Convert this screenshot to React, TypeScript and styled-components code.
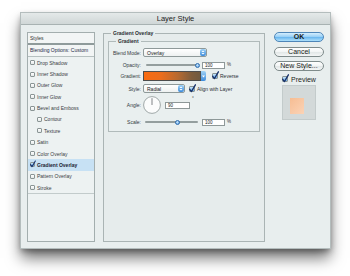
import React from 'react';
import styled, { createGlobalStyle } from 'styled-components';

const GlobalStyle = createGlobalStyle`
  html, body {
    margin: 0;
    padding: 0;
    background: #ffffff;
  }
  body {
    font-family: "Liberation Sans", Arial, sans-serif;
    color: #2c3034;
  }
  * {
    box-sizing: border-box;
  }
`;

const Page = styled.div`
  width: 350px;
  height: 276px;
  padding: 13px 0 0 21px;
  overflow: hidden;
`;

const Dialog = styled.div`
  width: 309px;
  height: 235px;
  background: #e8eeee;
  box-shadow: 0 0 0 1px #b4bdbd, 0 10px 14px rgba(0, 0, 0, 0.55), 0 3px 6px rgba(0, 0, 0, 0.35);
  display: flex;
  flex-direction: column;
`;

const TitleBar = styled.div`
  height: 12px;
  line-height: 12px;
  text-align: center;
  font-size: 7.5px;
  color: #222;
  background: linear-gradient(#e4e9e9, #d0d7d7);
  border-bottom: 1px solid #a8b2b2;
`;

const Body = styled.div`
  display: flex;
  align-items: flex-start;
  padding: 7px 6px 0 6px;
`;

/* ---------- left style list ---------- */

const StyleList = styled.div`
  width: 68px;
  height: 210px;
  border: 1px solid #a3aeae;
  background: #edf2f2;
  display: flex;
  flex-direction: column;
`;

const ListHeader = styled.div`
  height: 10px;
  line-height: 10px;
  padding-left: 2px;
  font-size: 5px;
  background: #f2f5f5;
`;

const HeaderRule = styled.div`
  height: 2px;
  background: #8f9b9b;
`;

const BlendingRow = styled.div`
  height: 12px;
  line-height: 11px;
  padding-left: 2px;
  font-size: 5px;
  color: #1e2a46;
  border-bottom: 1px solid #b6c0c0;
  background: #f2f5f5;
`;

const ListItem = styled.div<{ $indent?: boolean; $selected?: boolean }>`
  height: 11.36px;
  display: flex;
  align-items: center;
  gap: 2px;
  padding-left: ${p => (p.$indent ? 9 : 2)}px;
  font-size: 5px;
  font-weight: ${p => (p.$selected ? 'bold' : 'normal')};
  color: ${p => (p.$selected ? '#1b2233' : '#3a4044')};
  background: ${p => (p.$selected ? '#c7e1f4' : 'transparent')};
`;

const ListEnd = styled.div`
  border-top: 1px solid #c2cbcb;
`;

/* ---------- checkbox ---------- */

const Box = styled.span<{ $size: number; $checked?: boolean }>`
  flex: none;
  width: ${p => p.$size}px;
  height: ${p => p.$size}px;
  border: 1px solid #8a9595;
  border-radius: 1px;
  background: ${p => (p.$checked ? 'linear-gradient(#c6e4fb, #6fb1e8)' : 'linear-gradient(#ffffff, #e3e8e8)')};
  display: inline-flex;
  align-items: center;
  justify-content: center;
`;

const CheckMark = styled.svg`
  flex: none;
  overflow: visible;
`;

const Checkbox = ({ checked, size = 5 }: { checked?: boolean; size?: number }) => (
  <Box $size={size} $checked={checked}>
    {checked && (
      <CheckMark width={size} height={size} viewBox="0 0 6 6">
        <path d="M0.6 3.2 L2.4 5.6 L6.4 -1.2" fill="none" stroke="#16306a" strokeWidth="1.3" strokeLinecap="round" strokeLinejoin="round" />
      </CheckMark>
    )}
  </Box>
);

/* ---------- middle options ---------- */

const Group = styled.fieldset<{ $w: number; $h: number; $outer?: boolean }>`
  margin: ${p => (p.$outer ? '-2px 0 0 8px' : '0')};
  padding: ${p => (p.$outer ? '2px 4px 0 4px' : '4px 0 0 0')};
  width: ${p => p.$w}px;
  height: ${p => p.$h}px;
  min-width: 0;
  border: 1px solid ${p => (p.$outer ? '#aab4b4' : '#b0baba')};
  background: ${p => (p.$outer ? '#e6ecec' : '#e9efef')};
`;

const Legend = styled.legend<{ $ml: number }>`
  margin-left: ${p => p.$ml}px;
  padding: 0 2px;
  font-size: 5px;
  line-height: 6px;
  font-weight: bold;
  color: #2a2e33;
`;

const Row = styled.div<{ $h: number; $mt: number }>`
  display: grid;
  grid-template-columns: 32px auto;
  column-gap: 2px;
  align-items: center;
  height: ${p => p.$h}px;
  margin-top: ${p => p.$mt}px;
`;

const Label = styled.span`
  text-align: right;
  font-size: 5px;
  color: #333a3e;
  white-space: nowrap;
`;

const Controls = styled.div`
  display: flex;
  align-items: center;
`;

const Select = styled.div<{ $w: number }>`
  width: ${p => p.$w}px;
  height: 9px;
  border: 1px solid #8e9999;
  border-radius: 2px;
  background: linear-gradient(#ffffff, #eef1f1);
  display: flex;
  align-items: center;
  justify-content: space-between;
  padding-left: 3px;
  font-size: 5px;
  color: #222;
`;

const Stepper = styled.span`
  width: 6px;
  height: 7px;
  border-radius: 2px;
  background: linear-gradient(#9ed2f7, #3d8bdb);
  display: inline-flex;
  align-items: center;
  justify-content: center;
`;

const StepArrows = () => (
  <Stepper>
    <svg width="4" height="5" viewBox="0 0 4 5">
      <path d="M0.5 2 L2 0.4 L3.5 2 Z M0.5 3 L2 4.6 L3.5 3 Z" fill="#ffffff" />
    </svg>
  </Stepper>
);

const Track = styled.div<{ $w: number; $ml: number }>`
  position: relative;
  width: ${p => p.$w}px;
  height: 2px;
  margin-left: ${p => p.$ml}px;
  border-radius: 1px;
  background: #949e9e;
`;

const Thumb = styled.span`
  position: absolute;
  top: -1.5px;
  width: 5px;
  height: 5px;
  margin-left: -2.5px;
  border-radius: 50%;
  border: 1px solid #2f6cae;
  background: radial-gradient(circle at 40% 35%, #d4ecff, #4c9ae2);
`;

const NumberBox = styled.span<{ $w: number; $ml: number }>`
  width: ${p => p.$w}px;
  height: 7px;
  margin-left: ${p => p.$ml}px;
  border: 1px solid #8e9898;
  background: #ffffff;
  font-size: 4.5px;
  line-height: 5px;
  padding-left: 2px;
  color: #222;
`;

const Unit = styled.span`
  margin-left: 2px;
  font-size: 4.5px;
  align-self: flex-start;
  color: #333;
`;

const GradientSwatch = styled.span`
  width: 58px;
  height: 10px;
  border: 1px solid #4d4d4d;
  background: linear-gradient(90deg, #f86b12 0%, #ec6d1c 30%, #b86a30 60%, #7f5d3c 85%, #705a40 100%);
`;

const SwatchArrow = styled.span`
  width: 5px;
  height: 10px;
  border-radius: 0 2px 2px 0;
  background: linear-gradient(#9ed2f7, #3d8bdb);
  display: inline-flex;
  align-items: center;
  justify-content: center;
`;

const Inline = styled.span<{ $ml: number }>`
  display: inline-flex;
  align-items: center;
  gap: 2px;
  margin-left: ${p => p.$ml}px;
  font-size: 5px;
  color: #2a2e33;
  white-space: nowrap;
`;

const Dial = () => (
  <svg width="18" height="18" viewBox="0 0 18 18">
    <circle cx="9" cy="9" r="8.4" fill="#fbfcfc" stroke="#8a9494" strokeWidth="0.8" />
    <line x1="9" y1="9" x2="9" y2="2.2" stroke="#4a4f54" strokeWidth="0.7" />
  </svg>
);

/* ---------- right buttons ---------- */

const Actions = styled.div`
  width: 50px;
  margin-left: 9px;
  display: flex;
  flex-direction: column;
`;

const Button = styled.div<{ $primary?: boolean; $mt: number }>`
  height: 10px;
  margin-top: ${p => p.$mt}px;
  border-radius: 5px;
  border: 1px solid ${p => (p.$primary ? '#4f86b8' : '#7f8b8b')};
  background: ${p =>
    p.$primary
      ? 'linear-gradient(#d4eefe, #9bd1f6 45%, #6cb8ef 55%, #aee0fb)'
      : 'linear-gradient(#ffffff, #f1f4f4 50%, #e3e8e8 55%, #f4f6f6)'};
  text-align: center;
  font-size: 7px;
  line-height: 8px;
  font-weight: ${p => (p.$primary ? 'bold' : 'normal')};
  color: #1c1f22;
`;

const PreviewRow = styled.div`
  height: 8px;
  margin-top: 4px;
  padding-left: 8px;
  display: flex;
  align-items: center;
  gap: 3px;
  font-size: 7px;
  color: #1c1f22;
`;

const PreviewBox = styled.div`
  width: 34px;
  height: 35px;
  margin: 2px 0 0 8px;
  padding: 12px 0 0 7px;
  border: 1px solid #c3cbcb;
  background: #d3d9d9;
`;

const PreviewChip = styled.div`
  width: 14px;
  height: 16px;
  background: linear-gradient(135deg, #f6bd93, #fbd3b6);
`;

const effects = [
  { name: 'Drop Shadow' },
  { name: 'Inner Shadow' },
  { name: 'Outer Glow' },
  { name: 'Inner Glow' },
  { name: 'Bevel and Emboss' },
  { name: 'Contour', indent: true },
  { name: 'Texture', indent: true },
  { name: 'Satin' },
  { name: 'Color Overlay' },
  { name: 'Gradient Overlay', selected: true },
  { name: 'Pattern Overlay' },
  { name: 'Stroke' },
];

export default function App() {
  return (
    <>
      <GlobalStyle />
      <Page>
        <Dialog>
          <TitleBar>Layer Style</TitleBar>
          <Body>
            <StyleList>
              <ListHeader>Styles</ListHeader>
              <HeaderRule />
              <BlendingRow>Blending Options: Custom</BlendingRow>
              {effects.map(e => (
                <ListItem key={e.name} $indent={e.indent} $selected={e.selected}>
                  <Checkbox checked={e.selected} />
                  {e.name}
                </ListItem>
              ))}
              <ListEnd />
            </StyleList>

            <Group $outer $w={162} $h={212}>
              <Legend $ml={3}>Gradient Overlay</Legend>
              <Group $w={152} $h={94}>
                <Legend $ml={7}>Gradient</Legend>
                <Row $h={9} $mt={0}>
                  <Label>Blend Mode:</Label>
                  <Controls>
                    <Select $w={64}>
                      Overlay
                      <StepArrows />
                    </Select>
                  </Controls>
                </Row>
                <Row $h={8} $mt={4}>
                  <Label>Opacity:</Label>
                  <Controls>
                    <Track $w={51} $ml={3}>
                      <Thumb style={{ left: '100%' }} />
                    </Track>
                    <NumberBox $w={23} $ml={5}>100</NumberBox>
                    <Unit>%</Unit>
                  </Controls>
                </Row>
                <Row $h={10} $mt={2}>
                  <Label>Gradient:</Label>
                  <Controls>
                    <GradientSwatch />
                    <SwatchArrow>
                      <svg width="3" height="3" viewBox="0 0 3 3">
                        <path d="M0 0.6 L3 0.6 L1.5 2.6 Z" fill="#fff" />
                      </svg>
                    </SwatchArrow>
                    <Inline $ml={6}>
                      <Checkbox checked size={6} />
                      Reverse
                    </Inline>
                  </Controls>
                </Row>
                <Row $h={9} $mt={3}>
                  <Label>Style:</Label>
                  <Controls>
                    <Select $w={42}>
                      Radial
                      <StepArrows />
                    </Select>
                    <Inline $ml={4}>
                      <Checkbox checked size={6} />
                      Align with Layer
                    </Inline>
                  </Controls>
                </Row>
                <Row $h={18} $mt={3}>
                  <Label>Angle:</Label>
                  <Controls>
                    <Dial />
                    <NumberBox $w={25} $ml={4}>90</NumberBox>
                    <Unit>°</Unit>
                  </Controls>
                </Row>
                <Row $h={8} $mt={4}>
                  <Label>Scale:</Label>
                  <Controls>
                    <Track $w={53} $ml={2}>
                      <Thumb style={{ left: '62%' }} />
                    </Track>
                    <NumberBox $w={23} $ml={4}>100</NumberBox>
                    <Unit>%</Unit>
                  </Controls>
                </Row>
              </Group>
            </Group>

            <Actions>
              <Button $primary $mt={0}>OK</Button>
              <Button $mt={5}>Cancel</Button>
              <Button $mt={4}>New Style...</Button>
              <PreviewRow>
                <Checkbox checked size={6} />
                Preview
              </PreviewRow>
              <PreviewBox>
                <PreviewChip />
              </PreviewBox>
            </Actions>
          </Body>
        </Dialog>
      </Page>
    </>
  );
}
